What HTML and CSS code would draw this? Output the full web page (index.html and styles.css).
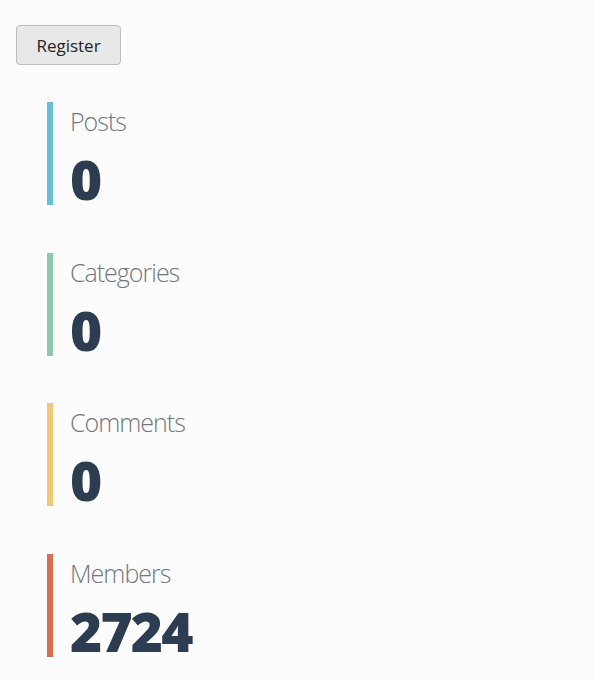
FILE: index.html
```html
<!DOCTYPE html>
<html lang="en">
<head>
<meta charset="utf-8">
<title>Stats</title>
<link rel="stylesheet" href="styles.css">
</head>
<body>
<div class="page">
  <button class="btn" type="button">Register</button>
  <div class="stats">
    <div class="stat stat-posts">
      <div class="stat-label">Posts</div>
      <div class="stat-value">0</div>
    </div>
    <div class="stat stat-categories">
      <div class="stat-label">Categories</div>
      <div class="stat-value">0</div>
    </div>
    <div class="stat stat-comments">
      <div class="stat-label">Comments</div>
      <div class="stat-value">0</div>
    </div>
    <div class="stat stat-members">
      <div class="stat-label">Members</div>
      <div class="stat-value">2724</div>
    </div>
  </div>
</div>
</body>
</html>
```
FILE: styles.css
```css
html, body {
  margin: 0;
  padding: 0;
  background: #fcfcfc;
}
body {
  font-family: "Open Sans", "Noto Sans", sans-serif;
}
.page {
  padding: 25px 16px 0 16px;
}
.btn {
  display: block;
  width: 105px;
  height: 40px;
  box-sizing: border-box;
  background: #e8e8e8;
  border: 1px solid #bdbdbd;
  border-radius: 4px;
  font-family: "Open Sans", sans-serif;
  font-stretch: 90%;
  font-weight: 400;
  font-size: 17px;
  color: #222;
  padding: 0;
}
.stats {
  display: flex;
  flex-direction: column;
  gap: 47.5px;
  margin-top: 37px;
  margin-left: 31px;
}
.stat {
  height: 103px;
  box-sizing: border-box;
  border-left: 6px solid #62bfd6;
  padding: 4px 0 0 17px;
}
.stat-posts { border-left-color: #62bfd6; }
.stat-categories { border-left-color: #8ccaae; }
.stat-comments { border-left-color: #f5c86c; }
.stat-members { border-left-color: #e06a4c; }
.stat-label {
  font-size: 25px;
  line-height: 30px;
  font-weight: 300;
  font-stretch: 90%;
  letter-spacing: -1px;
  color: #72777f;
}
.stat-value {
  margin-top: 17px;
  font-size: 55px;
  line-height: 52px;
  font-weight: 800;
  font-stretch: 96%;
  letter-spacing: -1.8px;
  color: #2c3d52;
}
```
